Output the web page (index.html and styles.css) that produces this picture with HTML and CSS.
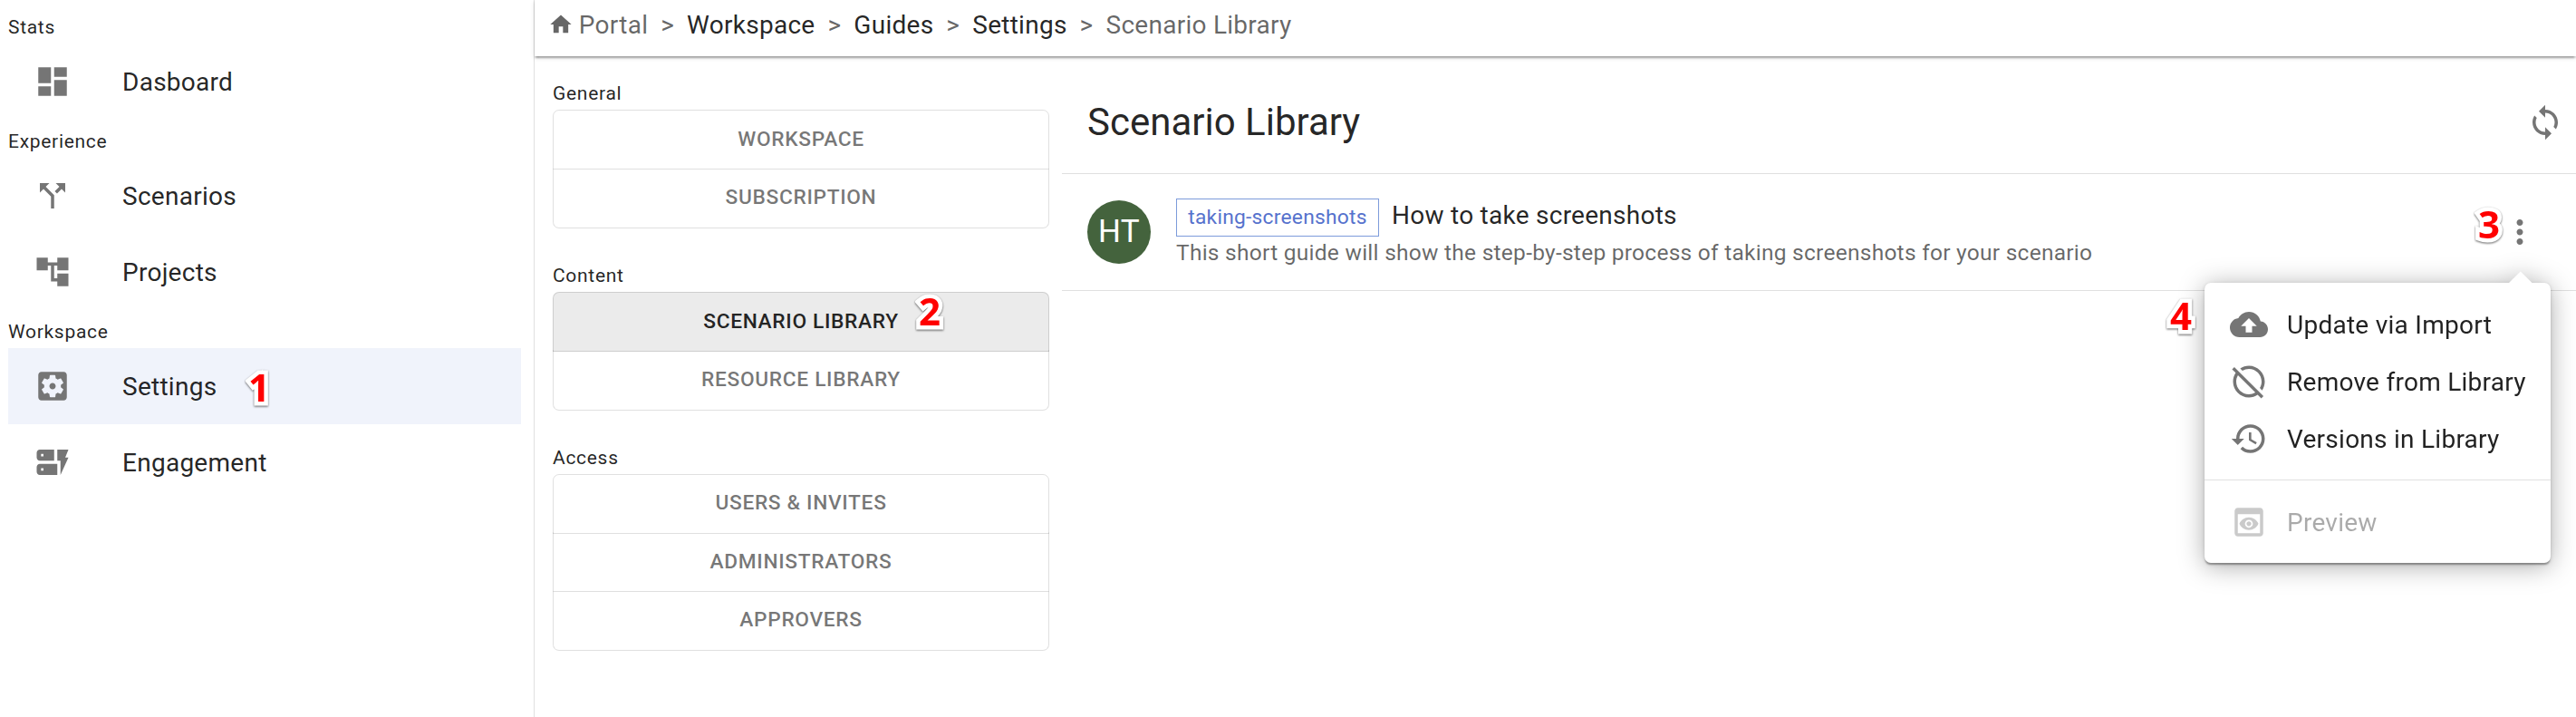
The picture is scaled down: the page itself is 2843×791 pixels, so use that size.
FILE: index.html
```html
<!DOCTYPE html>
<html lang="en">
<head>
<meta charset="utf-8">
<title>Scenario Library</title>
<link rel="stylesheet" href="styles.css">
</head>
<body>
<div class="app">
  <nav class="sidebar">
    <h2 class="caption">Stats</h2>
    <a class="nav-item"><svg class="icon" viewBox="0 0 24 24"><path d="M3 13h8V3H3v10zm0 8h8v-6H3v6zm10 0h8V11h-8v10zm0-18v6h8V3h-8z"/></svg><span>Dasboard</span></a>
    <h2 class="caption">Experience</h2>
    <a class="nav-item"><svg class="icon" viewBox="0 0 24 24"><path d="M14 4l2.29 2.29-2.88 2.88 1.42 1.42 2.88-2.88L20 10V4zm-4 0H4v6l2.29-2.29 4.71 4.7V20h2v-8.41l-5.29-5.3z"/></svg><span>Scenarios</span></a>
    <a class="nav-item"><svg class="icon" viewBox="0 0 24 24"><path d="M22 11V3h-7v3H9V3H2v8h7V8h2v10h4v3h7v-8h-7v3h-2V8h2v3z"/></svg><span>Projects</span></a>
    <h2 class="caption">Workspace</h2>
    <a class="nav-item selected"><svg class="icon" viewBox="0 0 24 24"><path d="M12 10c-1.1 0-2 .9-2 2s.9 2 2 2 2-.9 2-2-.9-2-2-2zm7-7H5c-1.11 0-2 .9-2 2v14c0 1.1.89 2 2 2h14c1.11 0 2-.9 2-2V5c0-1.1-.89-2-2-2zm-1.75 9c0 .23-.02.46-.05.68l1.48 1.16c.13.11.17.3.08.45l-1.4 2.42c-.09.15-.27.21-.43.15l-1.74-.7c-.36.28-.76.51-1.18.69l-.26 1.85c-.03.17-.18.3-.35.3h-2.8c-.17 0-.32-.13-.35-.29l-.26-1.85c-.43-.18-.82-.41-1.18-.69l-1.74.7c-.16.06-.34 0-.43-.15l-1.4-2.42c-.09-.15-.05-.34.08-.45l1.48-1.16c-.03-.23-.05-.46-.05-.69 0-.23.02-.46.05-.68l-1.48-1.16c-.13-.11-.17-.3-.08-.45l1.4-2.42c.09-.15.27-.21.43-.15l1.74.7c.36-.28.76-.51 1.18-.69l.26-1.85c.03-.17.18-.3.35-.3h2.8c.17 0 .32.13.35.29l.26 1.85c.43.18.82.41 1.18.69l1.74-.7c.16-.06.34 0 .43.15l1.4 2.42c.09.15.05.34-.08.45l-1.48 1.16c.03.23.05.46.05.69z"/></svg><span>Settings</span></a>
    <a class="nav-item"><svg class="icon" viewBox="0 0 24 24"><path d="M17 20v-9h-2V4h7l-2 5h2l-5 11zm-2-7v7H4c-1.1 0-2-.9-2-2v-3c0-1.1.9-2 2-2h11zm-8.75 2.75h-1.5v1.5h1.5v-1.5zM13 4v7H4c-1.1 0-2-.9-2-2V6c0-1.1.9-2 2-2h9zM6.25 6.75h-1.5v1.5h1.5v-1.5z"/></svg><span>Engagement</span></a>
  </nav>

  <div class="page">
    <header class="breadcrumbs">
      <svg class="home" viewBox="0 0 24 24"><path d="M10 20v-6h4v6h5v-8h3L12 3 2 12h3v8z"/></svg>
      <span>Portal</span><span class="sep">&gt;</span>
      <a class="crumb">Workspace</a><span class="sep">&gt;</span>
      <a class="crumb">Guides</a><span class="sep">&gt;</span>
      <a class="crumb">Settings</a><span class="sep">&gt;</span>
      <span>Scenario Library</span>
    </header>

    <div class="content">
      <aside class="settings">
        <h3 class="group-label">General</h3>
        <div class="group">
          <button class="toggle">WORKSPACE</button>
          <button class="toggle">SUBSCRIPTION</button>
        </div>
        <h3 class="group-label">Content</h3>
        <div class="group">
          <button class="toggle active">SCENARIO LIBRARY</button>
          <button class="toggle">RESOURCE LIBRARY</button>
        </div>
        <h3 class="group-label">Access</h3>
        <div class="group">
          <button class="toggle">USERS &amp; INVITES</button>
          <button class="toggle">ADMINISTRATORS</button>
          <button class="toggle">APPROVERS</button>
        </div>
      </aside>

      <main class="library">
        <div class="title-bar">
          <h1 class="title">Scenario Library</h1>
          <svg class="icon" viewBox="0 0 24 24"><path d="M12 4V1L8 5l4 4V6c3.31 0 6 2.69 6 6 0 1.01-.25 1.97-.7 2.8l1.46 1.46C19.54 15.03 20 13.57 20 12c0-4.42-3.58-8-8-8zm0 14c-3.31 0-6-2.69-6-6 0-1.01.25-1.97.7-2.8L5.24 7.74C4.46 8.97 4 10.43 4 12c0 4.42 3.58 8 8 8v3l4-4-4-4v3z"/></svg>
        </div>
        <div class="row">
          <div class="avatar">HT</div>
          <div class="details">
            <div class="primary"><span class="chip">taking-screenshots</span><span class="name">How to take screenshots</span></div>
            <div class="secondary">This short guide will show the step-by-step process of taking screenshots for your scenario</div>
          </div>
          <svg class="icon more" viewBox="0 0 24 24"><path d="M12 8c1.1 0 2-.9 2-2s-.9-2-2-2-2 .9-2 2 .9 2 2 2zm0 2c-1.1 0-2 .9-2 2s.9 2 2 2 2-.9 2-2-.9-2-2-2zm0 6c-1.1 0-2 .9-2 2s.9 2 2 2 2-.9 2-2-.9-2-2-2z"/></svg>
        </div>
      </main>
    </div>
  </div>
</div>

<div class="menu">
  <div class="menu-item"><svg class="icon" viewBox="0 0 24 24"><path d="M19.35 10.04C18.67 6.59 15.64 4 12 4 9.11 4 6.6 5.64 5.35 8.04 2.34 8.36 0 10.91 0 14c0 3.31 2.69 6 6 6h13c2.76 0 5-2.24 5-5 0-2.64-2.05-4.78-4.65-4.96zM14 13v4h-4v-4H7l5-5 5 5h-3z"/></svg><span>Update via Import</span></div>
  <div class="menu-item"><svg class="icon" viewBox="0 0 24 24"><path d="M2.81 2.81 1.39 4.22l2.27 2.27C2.61 8.07 2 9.97 2 12c0 5.52 4.48 10 10 10 2.04 0 3.93-.61 5.51-1.66l2.27 2.27 1.41-1.41L2.81 2.81zM12 20c-4.41 0-8-3.59-8-8 0-1.48.41-2.86 1.12-4.06l10.94 10.94C14.86 19.59 13.48 20 12 20zM7.94 5.12 6.49 3.66C8.07 2.61 9.96 2 12 2c5.52 0 10 4.48 10 10 0 2.04-.61 3.93-1.66 5.51l-1.46-1.46C19.59 14.86 20 13.48 20 12c0-4.41-3.59-8-8-8-1.48 0-2.86.41-4.06 1.12z"/></svg><span>Remove from Library</span></div>
  <div class="menu-item"><svg class="icon" viewBox="0 0 24 24"><path d="M13 3c-4.97 0-9 4.03-9 9H1l3.89 3.89.07.14L9 12H6c0-3.87 3.13-7 7-7s7 3.13 7 7-3.13 7-7 7c-1.93 0-3.68-.79-4.94-2.06l-1.42 1.42C8.27 19.99 10.51 21 13 21c4.97 0 9-4.03 9-9s-4.03-9-9-9zm-1 5v5l4.28 2.54.72-1.21-3.5-2.08V8H12z"/></svg><span>Versions in Library</span></div>
  <hr class="menu-divider">
  <div class="menu-item disabled"><svg class="icon" viewBox="0 0 24 24"><path d="M19 3H5c-1.11 0-2 .9-2 2v14c0 1.1.89 2 2 2h14c1.1 0 2-.9 2-2V5c0-1.1-.89-2-2-2zm0 16H5V7h14v12zm-5.5-6c0 .83-.67 1.5-1.5 1.5s-1.5-.67-1.5-1.5.67-1.5 1.5-1.5 1.5.67 1.5 1.5zM12 9c-2.73 0-5.06 1.66-6 4 .94 2.34 3.27 4 6 4s5.06-1.66 6-4c-.94-2.34-3.27-4-6-4zm0 6.5c-1.38 0-2.5-1.12-2.5-2.5s1.12-2.5 2.5-2.5 2.5 1.12 2.5 2.5-1.12 2.5-2.5 2.5z"/></svg><span>Preview</span></div>
</div>

<span class="step step-1">1</span>
<span class="step step-2">2</span>
<span class="step step-3">3</span>
<span class="step step-4">4</span>
</body>
</html>
```

FILE: styles.css
```css
* { box-sizing: border-box; }

body {
  margin: 0;
  height: 791px;
  position: relative;
  overflow: hidden;
  background: #fff;
  color: rgba(0, 0, 0, .87);
  font-family: Roboto, "Liberation Sans", sans-serif;
  font-size: 28px;
  line-height: 42px;
  letter-spacing: .00938em;
}

.app { display: flex; height: 791px; }

.icon {
  width: 42px;
  height: 42px;
  flex: none;
  fill: #757575;
}

/* Sidebar */
.sidebar {
  flex: none;
  width: 590px;
  padding: 6px 14px 0 9px;
  border-right: 1px solid #e0e0e0;
}

.caption, .group-label {
  margin: 0;
  font-size: 21px;
  font-weight: 400;
  line-height: 34.86px;
  letter-spacing: .03333em;
}

.caption { height: 42px; padding-top: 7px; }

.nav-item {
  display: flex;
  align-items: center;
  gap: 56px;
  height: 84px;
  padding-left: 28px;
}

.nav-item span { padding-top: 2px; }
.nav-item.selected { background: #f0f3fb; }

/* Header */
.page { flex: 1; min-width: 0; display: flex; flex-direction: column; }

.breadcrumbs {
  display: flex;
  align-items: flex-start;
  height: 62px;
  padding: 7px 0 0 14.5px;
  color: rgba(0, 0, 0, .6);
  box-shadow: 0 3.5px 1.75px -1.75px rgba(0, 0, 0, .2), 0 1.75px 1.75px rgba(0, 0, 0, .14), 0 1.75px 5.25px rgba(0, 0, 0, .12);
}

.home { flex: none; width: 28px; height: 28px; margin: 6px 6.3px 0 0; fill: #666; }
.crumb { color: rgba(0, 0, 0, .87); }
.sep { margin: 0 14px; }

/* Settings column */
.content { display: flex; flex: 1; }

.settings { flex: none; width: 582px; padding: 24.3px 14px 0 20px; }

.group { display: flex; flex-direction: column; margin-bottom: 35px; }

.toggle {
  height: 66.3px;
  margin: 0;
  padding: 0 0 1px;
  border: 1px solid rgba(0, 0, 0, .12);
  background: transparent;
  color: rgba(0, 0, 0, .54);
  font: 500 22.75px/40px Roboto, "Liberation Sans", sans-serif;
  letter-spacing: .02857em;
}

.toggle + .toggle { margin-top: -1.75px; border-top-color: transparent; }
.toggle:first-child { border-radius: 7px 7px 0 0; }
.toggle:last-child { border-radius: 0 0 7px 7px; }
.toggle.active { background: #ebebeb; color: rgba(0, 0, 0, .87); }

/* Library */
.library { flex: 1; min-width: 0; }

.title-bar {
  display: flex;
  align-items: center;
  justify-content: space-between;
  height: 130px;
  padding: 16px 13px 0 28px;
  border-bottom: 1px solid #e0e0e0;
}

.title { margin: 0; font-size: 42px; font-weight: 400; line-height: 56px; letter-spacing: 0; }

.row {
  display: flex;
  align-items: center;
  height: 129px;
  padding: 0 41px 0 28px;
  border-bottom: 1px solid #e0e0e0;
}

.avatar {
  display: flex;
  align-items: center;
  justify-content: center;
  width: 70px;
  height: 70px;
  border-radius: 50%;
  background: #44633d;
  color: #fff;
  font-size: 35px;
}

.details { flex: 1; margin-left: 28px; padding-top: 3px; }
.primary { display: flex; align-items: flex-start; height: 42px; }

.chip {
  height: 42px;
  padding: 0 12.25px;
  border: 1px solid #7d9bdb;
  color: #5672cd;
  font-size: 22.75px;
  line-height: 40px;
}

.name { margin-left: 14px; line-height: 37px; }
.secondary { font-size: 24.5px; line-height: 35px; letter-spacing: .01071em; color: rgba(0, 0, 0, .6); }

/* Context menu */
.menu {
  position: absolute;
  left: 2433px;
  top: 312px;
  width: 382px;
  height: 309px;
  padding: 14px 0;
  border-radius: 7px;
  background: #fff;
  box-shadow: 0 3.5px 1.75px -1.75px rgba(0, 0, 0, .2), 0 1.75px 1.75px rgba(0, 0, 0, .14), 0 1.75px 5.25px rgba(0, 0, 0, .12);
  filter: drop-shadow(0 3.5px 14px rgba(0, 0, 0, .32));
}

.menu::before {
  content: "";
  position: absolute;
  top: -9px;
  right: 24.5px;
  width: 17.5px;
  height: 17.5px;
  background: #fff;
  transform: rotate(45deg);
}

.menu-item {
  position: relative;
  display: flex;
  align-items: center;
  gap: 21px;
  height: 63px;
  padding-left: 28px;
  white-space: nowrap;
}

.menu-item span { padding-top: 2px; }
.menu-item.disabled { opacity: .38; }
.menu-divider { height: 1px; margin: 14px 0; border: 0; background: #e0e0e0; }

/* Numbered step callouts */
.step {
  position: absolute;
  color: #f00;
  font: 700 42px/42px "Open Sans", "Noto Sans", sans-serif;
  letter-spacing: 0;
  -webkit-text-stroke: 9px #fff;
  paint-order: stroke fill;
  stroke-linejoin: round;
  filter: drop-shadow(0 1px 1px rgba(0, 0, 0, .6));
}

.step-1 { left: 274px; top: 406px; }
.step-2 { left: 1014px; top: 322px; }
.step-3 { left: 2735px; top: 226px; }
.step-4 { left: 2395px; top: 327px; }
```
